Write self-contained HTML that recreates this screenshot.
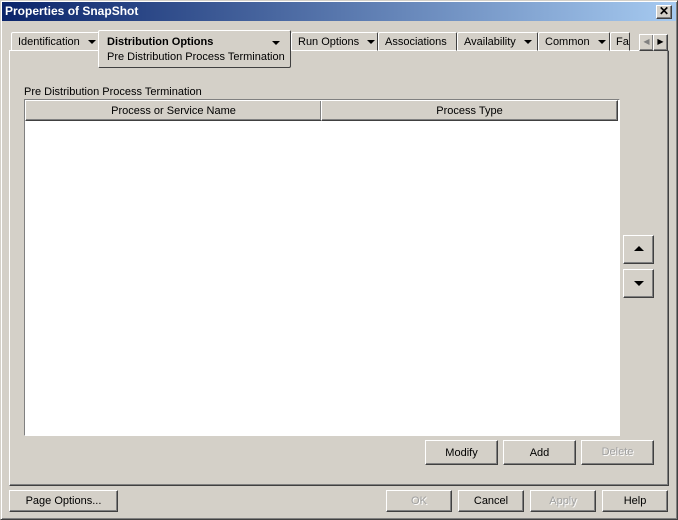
<!DOCTYPE html><html><head><style>
*{box-sizing:border-box}body{margin:0;width:678px;height:520px;background:#d4d0c8;font-family:"Liberation Sans",sans-serif;font-size:11px;position:relative;overflow:hidden}
.a{position:absolute}
.win{left:0;top:0;width:678px;height:520px;border:1px solid;border-color:#d4d0c8 #404040 #404040 #d4d0c8;box-shadow:inset 1px 1px #fff,inset -1px -1px #808080}
.title{left:2px;top:2px;width:674px;height:19px;background:linear-gradient(90deg,#0a246a,#a6caf0);color:#fff;font-weight:bold;font-size:12px;padding:2px 3px}
.btn{position:absolute;background:#d4d0c8;border:1px solid;border-color:#fff #404040 #404040 #fff;box-shadow:inset -1px -1px #808080;text-align:center;line-height:20px}
.dis{color:#a0a0a0;text-shadow:1px 1px #fff}
.tab{position:absolute;top:32px;height:19px;border:1px solid;border-color:#fff #404040 transparent #fff;border-radius:2px 2px 0 0;padding:3px 6px;white-space:nowrap}
.ar{display:inline-block;width:0;height:0;border-left:4px solid transparent;border-right:4px solid transparent;border-top:4px solid #000;vertical-align:middle;margin-left:8px}
.tri{position:absolute;left:10px;width:0;height:0;border-left:5px solid transparent;border-right:5px solid transparent}
</style></head><body>
<div class="a win"></div>
<div class="a title">Properties of SnapShot</div>
<div class="btn" style="left:656px;top:5px;width:16px;height:14px;line-height:10px;font-weight:bold;font-size:12px">✕</div>
<div class="a" style="left:9px;top:50px;width:660px;height:436px;border:1px solid;border-color:#fff #404040 #404040 #fff;box-shadow:inset -1px -1px #808080"></div>
<div class="tab" style="left:11px;width:88px">Identification<span class="ar"></span></div>
<div class="tab" style="left:291px;width:87px">Run Options<span class="ar"></span></div>
<div class="tab" style="left:378px;width:79px">Associations</div>
<div class="tab" style="left:457px;width:81px">Availability<span class="ar"></span></div>
<div class="tab" style="left:538px;width:72px">Common<span class="ar"></span></div>
<div class="tab" style="left:610px;width:20px;overflow:hidden;padding-left:5px">Fa</div>
<div class="a" style="left:98px;top:30px;width:193px;height:38px;background:#d4d0c8;border:1px solid;border-color:#fff #404040 #404040 #fff;border-radius:2px;padding:4px 0 0 8px;line-height:15px;white-space:nowrap"><b style="font-size:11px">Distribution Options</b><span class="ar" style="position:absolute;right:10px;top:10px"></span><br>Pre Distribution Process Termination</div>
<div class="btn" style="left:639px;top:34px;width:15px;height:17px;line-height:14px;font-size:8px;color:#808080">◀</div>
<div class="btn" style="left:653px;top:34px;width:15px;height:17px;line-height:14px;font-size:8px">▶</div>
<div class="a" style="left:24px;top:86px">Pre Distribution Process Termination</div>
<div class="a" style="left:24px;top:99px;width:596px;height:337px;background:#fff;border:1px solid;border-color:#808080 #fff #fff #808080"></div>
<div class="btn" style="left:25px;top:100px;width:297px;height:21px;line-height:20px">Process or Service Name</div>
<div class="btn" style="left:321px;top:100px;width:297px;height:21px;line-height:20px">Process Type</div>
<div class="btn" style="left:623px;top:235px;width:31px;height:29px"><div class="tri" style="top:10px;border-bottom:5px solid #000"></div></div>
<div class="btn" style="left:623px;top:269px;width:31px;height:29px"><div class="tri" style="top:11px;border-top:5px solid #000"></div></div>
<div class="btn" style="left:425px;top:440px;width:73px;height:25px;line-height:24px">Modify</div>
<div class="btn" style="left:503px;top:440px;width:73px;height:25px;line-height:24px">Add</div>
<div class="btn dis" style="left:581px;top:440px;width:73px;height:25px;line-height:22px">Delete</div>
<div class="btn" style="left:9px;top:490px;width:109px;height:22px">Page Options...</div>
<div class="btn dis" style="left:386px;top:490px;width:66px;height:22px">OK</div>
<div class="btn" style="left:458px;top:490px;width:66px;height:22px">Cancel</div>
<div class="btn dis" style="left:530px;top:490px;width:66px;height:22px">Apply</div>
<div class="btn" style="left:602px;top:490px;width:66px;height:22px">Help</div>
</body></html>
